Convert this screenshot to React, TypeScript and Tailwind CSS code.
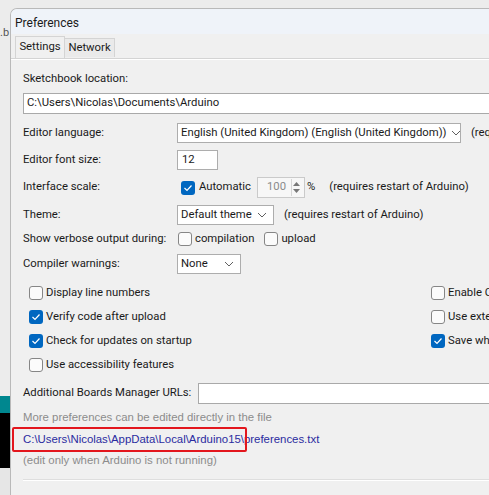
import React from "react";

const ui = "font-['Segoe_UI','Roboto',sans-serif] text-[11.3px] text-[#1a1a1a]";
const tahoma = "font-['Tahoma','Liberation_Sans',sans-serif] text-[11.4px]";

function Chevron() {
  return (
    <svg width="10" height="6" viewBox="0 0 10 6" className="shrink-0">
      <polyline points="1,1 5,5 9,1" fill="none" stroke="#606060" strokeWidth="1" />
    </svg>
  );
}

function Check({ checked }: { checked?: boolean }) {
  if (checked) {
    return (
      <span className="flex h-[14px] w-[14px] shrink-0 items-center justify-center rounded-[3px] bg-[#0067c0]">
        <svg width="10" height="8" viewBox="0 0 10 8">
          <polyline points="1.5,4 4,6.5 8.5,1.5" fill="none" stroke="#ffffff" strokeWidth="1.2" />
        </svg>
      </span>
    );
  }
  return <span className="block h-[14px] w-[14px] shrink-0 rounded-[3px] border border-[#868686] bg-[#fbfbfb]" />;
}

function CheckItem({ label, checked }: { label: string; checked?: boolean }) {
  return (
    <div className="flex h-[24px] items-center gap-[3px] whitespace-nowrap">
      <Check checked={checked} />
      <span>{label}</span>
    </div>
  );
}

function Select({ value, width }: { value: string; width: string }) {
  return (
    <div
      className={`flex h-[20px] ${width} shrink-0 items-center justify-between gap-[4px] border border-[#adadad] bg-white pl-[3px] pr-[6px] whitespace-nowrap`}
    >
      <span>{value}</span>
      <Chevron />
    </div>
  );
}

function Row({ label, children, className }: { label: string; children: React.ReactNode; className: string }) {
  return (
    <div className={`flex items-center ${className}`}>
      <span className="w-[154px] shrink-0 whitespace-nowrap">{label}</span>
      {children}
    </div>
  );
}

export default function App() {
  return (
    <div className={`flex h-[495px] w-[489px] flex-col overflow-hidden bg-[#ececec] ${ui}`}>
      <div className="h-[8px] shrink-0" />
      <div className="flex min-h-0 flex-1">
        {/* background window peeking out on the left */}
        <div className="flex w-[10px] shrink-0 flex-col overflow-hidden">
          <div className="h-[18px]" />
          <span className="whitespace-nowrap text-[11px] leading-[14px] text-[#555]">.b</span>
          <div className="flex-1" />
          <div className="h-[17px] bg-[#00878f]" />
          <div className="h-[55px] bg-black" />
          <div className="h-[27px] bg-[#e6e6e6]" />
        </div>

        {/* Preferences dialog */}
        <div className="flex min-w-0 flex-1 flex-col overflow-hidden rounded-tl-[7px] border-l border-t border-[#b9b9b9] bg-[#f0f0f0]">
          <div className="flex h-[25px] shrink-0 items-center bg-[#eff3f9] pl-[4px] pt-[2px] text-[12px]">Preferences</div>

          {/* tabs */}
          <div className="flex h-[24px] shrink-0 items-end pl-[4px]">
            <div className="flex h-[22px] w-[50px] items-center justify-center border border-b-0 border-[#d4d4d4] bg-[#f0f0f0]">
              Settings
            </div>
            <div className="mb-[1px] flex h-[19px] w-[50px] items-center justify-center border border-l-0 border-b-0 border-[#d4d4d4] bg-[#eaeaea]">
              Network
            </div>
          </div>

          <div className="flex flex-1 flex-col border-t border-[#d4d4d4] pl-[12px] shadow-[inset_0_1px_0_#ffffff]">
            <div className="mt-[10px] flex h-[20px] items-center">Sketchbook location:</div>
            <div className="mt-[4px] flex h-[21px] items-center border border-r-0 border-[#a9a9a9] bg-white pl-[3px]">
              C:\Users\Nicolas\Documents\Arduino
            </div>

            <Row label="Editor language:" className="mt-[9px] h-[20px]">
              <Select value="English (United Kingdom) (English (United Kingdom))" width="w-[284px]" />
              <span className="ml-[10px] whitespace-nowrap">(requires restart of Arduino)</span>
            </Row>

            <Row label="Editor font size:" className="mt-[7px] h-[20px]">
              <div className="flex h-[20px] w-[41px] items-center border border-[#adadad] bg-white pl-[4px]">12</div>
            </Row>

            <Row label="Interface scale:" className="mt-[7px] h-[21px]">
              <span className="ml-[4px] flex">
                <Check checked />
              </span>
              <span className="ml-[4px]">Automatic</span>
              <div className="ml-[6px] flex h-[21px] w-[48px] items-center justify-between border border-[#cacaca] bg-[#f7f7f7] pl-[9px] pr-[2px]">
                <span className="text-[#8a8a8a]">100</span>
                <div className="flex h-[17px] w-[11px] flex-col items-center justify-center gap-[3px] border-l border-[#d6d6d6]">
                  <svg width="7" height="4" viewBox="0 0 7 4">
                    <polygon points="0,4 3.5,0 7,4" fill="#777" />
                  </svg>
                  <svg width="7" height="4" viewBox="0 0 7 4">
                    <polygon points="0,0 3.5,4 7,0" fill="#777" />
                  </svg>
                </div>
              </div>
              <span className="ml-[2px]">%</span>
              <span className="ml-[14px] whitespace-nowrap">(requires restart of Arduino)</span>
            </Row>

            <Row label="Theme:" className="mt-[7px] h-[20px]">
              <Select value="Default theme" width="w-[97px]" />
              <span className="ml-[10px] whitespace-nowrap">(requires restart of Arduino)</span>
            </Row>

            <Row label="Show verbose output during:" className="mt-[5px] h-[18px]">
              <span className="ml-[1px] flex">
                <Check />
              </span>
              <span className="ml-[3px]">compilation</span>
              <span className="ml-[10px] flex">
                <Check />
              </span>
              <span className="ml-[3px]">upload</span>
            </Row>

            <Row label="Compiler warnings:" className="mt-[6px] h-[20px]">
              <Select value="None" width="w-[64px]" />
            </Row>

            <div className="mt-[7px] flex">
              <div className="ml-[6px] flex w-[402px] shrink-0 flex-col">
                <CheckItem label="Display line numbers" />
                <CheckItem label="Verify code after upload" checked />
                <CheckItem label="Check for updates on startup" checked />
                <CheckItem label="Use accessibility features" />
              </div>
              <div className="flex flex-col">
                <CheckItem label="Enable Code Folding" />
                <CheckItem label="Use external editor" />
                <CheckItem label="Save when verifying or uploading" checked />
              </div>
            </div>

            <div className="mt-[6px] flex h-[20px] items-center">
              <span className="w-[175px] shrink-0 whitespace-nowrap">Additional Boards Manager URLs:</span>
              <div className="h-[21px] flex-1 border border-r-0 border-[#a9a9a9] bg-white" />
            </div>

            <div className={`mt-[6px] flex h-[18px] items-center whitespace-nowrap text-[#8c8c8c] ${tahoma}`}>
              More preferences can be edited directly in the file
            </div>
            <div className="relative flex h-[25px] items-center">
              <span className={`whitespace-nowrap text-[#2b2ba0] ${tahoma}`}>
                C:\Users\Nicolas\AppData\Local\Arduino15\preferences.txt
              </span>
              <div className="absolute -left-[11px] top-0 h-[25px] w-[235px] rounded-[2px] border-2 border-[#e3161d]" />
            </div>
            <div className={`flex h-[18px] items-center whitespace-nowrap text-[#8c8c8c] ${tahoma}`}>
              (edit only when Arduino is not running)
            </div>

            <div className="mt-[9px] h-[2px] border-t border-[#dedede] bg-white" />
          </div>
        </div>
      </div>
    </div>
  );
}
